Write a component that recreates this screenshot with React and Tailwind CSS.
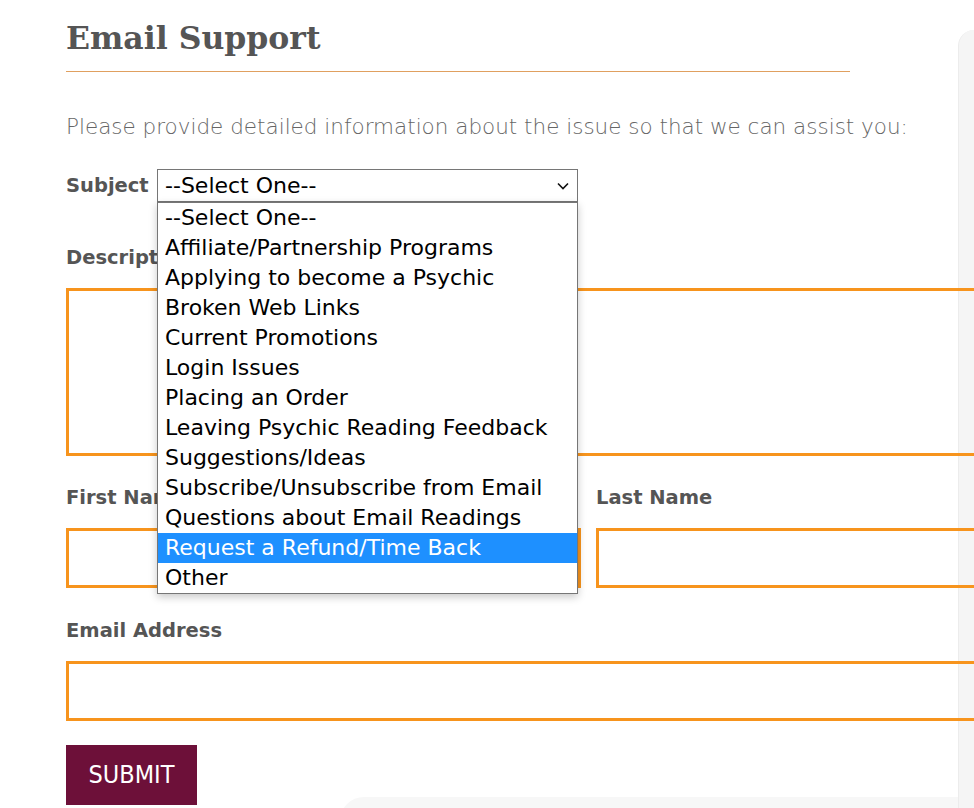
import { useState } from 'react';

const options = [
  '--Select One--',
  'Affiliate/Partnership Programs',
  'Applying to become a Psychic',
  'Broken Web Links',
  'Current Promotions',
  'Login Issues',
  'Placing an Order',
  'Leaving Psychic Reading Feedback',
  'Suggestions/Ideas',
  'Subscribe/Unsubscribe from Email',
  'Questions about Email Readings',
  'Request a Refund/Time Back',
  'Other',
];

const body = { fontFamily: '"DejaVu Sans", Lato, sans-serif' };

const EmailSupportPage = () => {
  const [hovered, setHovered] = useState('Request a Refund/Time Back');

  return (
    <div className="relative flex w-[974px] min-h-[808px] overflow-hidden bg-white" style={body}>
      <div className="relative z-10 w-[958px] shrink-0 pl-[66px]">
        {/* Heading */}
        <h1
          className="pt-[18px] text-[31.5px] font-bold leading-[40px] text-[#555555]"
          style={{ fontFamily: '"DejaVu Serif", serif' }}
        >
          Email Support
        </h1>
        <div className="mt-[13px] h-px w-[784px] bg-[#e0a060]" />

        <p className="mt-[42px] text-[21.5px] font-extralight leading-[26px] text-[#666666]">
          Please provide detailed information about the issue so that we can assist you:
        </p>

        {/* Subject */}
        <div className="mt-[29px] flex items-center">
          <label className="w-[91px] text-[19.5px] font-bold text-[#555555]">Subject</label>
          <div className="relative w-[421px]">
            <div className="flex h-[33px] items-center justify-between border border-[#767676] bg-white pl-[7px] pr-[8px] text-[22px] text-black">
              <span>--Select One--</span>
              <svg width="12" height="8" viewBox="0 0 12 8" fill="none" stroke="#111" strokeWidth="1.6">
                <path d="M1 1.5 L6 6.5 L11 1.5" />
              </svg>
            </div>
            {/* Open option list */}
            <ul className="absolute left-0 top-full z-20 w-full border border-[#767676] bg-white shadow-[0_3px_8px_rgba(0,0,0,0.22)]">
              {options.map((opt) => (
                <li
                  key={opt}
                  onMouseEnter={() => setHovered(opt)}
                  className={`h-[30px] whitespace-nowrap pl-[7px] text-[22px] leading-[29px] ${
                    hovered === opt ? 'bg-[#1e90ff] text-white' : 'text-black'
                  }`}
                >
                  {opt}
                </li>
              ))}
            </ul>
          </div>
        </div>

        {/* Description */}
        <label className="mt-[44px] block text-[19.5px] font-bold leading-[24px] text-[#555555]">Description</label>
        <textarea className="mt-[18px] block h-[168px] w-[960px] resize-none border-[3px] border-[#f7941d] outline-none" />

        {/* Names */}
        <div className="mt-[30px] flex gap-[15px]">
          <div className="w-[515px] shrink-0">
            <label className="block text-[19.5px] font-bold leading-[24px] text-[#555555]">First Name</label>
            <input className="mt-[18px] block h-[60px] w-full border-[3px] border-[#f7941d] outline-none" />
          </div>
          <div className="w-[515px] shrink-0">
            <label className="block text-[19.5px] font-bold leading-[24px] text-[#555555]">Last Name</label>
            <input className="mt-[18px] block h-[60px] w-full border-[3px] border-[#f7941d] outline-none" />
          </div>
        </div>

        {/* Email */}
        <label className="mt-[31px] block text-[19.5px] font-bold leading-[24px] text-[#555555]">Email Address</label>
        <input className="mt-[18px] block h-[60px] w-[960px] border-[3px] border-[#f7941d] outline-none" />

        <button
          className="mt-[24px] block h-[60px] w-[131px] bg-[#6d1039] text-[25px] text-white"
          style={{ fontFamily: '"DejaVu Sans Condensed", "Liberation Sans Narrow", sans-serif' }}
        >
          SUBMIT
        </button>

        {/* Next section edge */}
        <div className="-mt-[8px] ml-[274px] h-[30px] rounded-tl-[24px] bg-[#f7f7f7]" />
      </div>

      {/* Sidebar panel edge */}
      <div className="mt-[30px] flex-1 rounded-tl-[40px] border-l border-[#ececec] bg-[#f5f5f5]" />
    </div>
  );
};

export default EmailSupportPage;
